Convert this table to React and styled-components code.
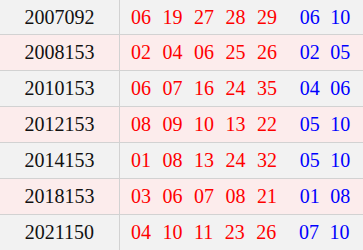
import React from "react";
import styled, { createGlobalStyle } from "styled-components";

const GlobalStyle = createGlobalStyle`
  body {
    margin: 0;
    background: #ffffff;
    font-family: "Liberation Serif", "Times New Roman", serif;
  }
`;

const DRAWS = [
  { issue: "2007092", red: ["06", "19", "27", "28", "29"], blue: ["06", "10"] },
  { issue: "2008153", red: ["02", "04", "06", "25", "26"], blue: ["02", "05"] },
  { issue: "2010153", red: ["06", "07", "16", "24", "35"], blue: ["04", "06"] },
  { issue: "2012153", red: ["08", "09", "10", "13", "22"], blue: ["05", "10"] },
  { issue: "2014153", red: ["01", "08", "13", "24", "32"], blue: ["05", "10"] },
  { issue: "2018153", red: ["03", "06", "07", "08", "21"], blue: ["01", "08"] },
  { issue: "2021150", red: ["04", "10", "11", "23", "26"], blue: ["07", "10"] },
];

const Table = styled.div`
  width: 363px;
  height: 250px;
  overflow: hidden;
`;

const Row = styled.div`
  display: grid;
  grid-template-columns: 120px 1fr;
  height: 35px;
  border-bottom: 1px solid #d2d2d2;
  background: ${(p) => (p.$odd ? "#fcecec" : "#f2f2f2")};

  &:first-child {
    height: 34px;
  }
`;

const IssueCell = styled.div`
  display: flex;
  align-items: center;
  justify-content: center;
  border-right: 1px solid #d2d2d2;
  font-size: 20px;
  color: #111;
`;

const NumbersCell = styled.div`
  display: flex;
  align-items: center;
  padding-left: 11px;
  font-size: 20px;
`;

const Group = styled.div`
  display: flex;
  gap: ${(p) => p.$gap}px;
  margin-left: ${(p) => p.$offset || 0}px;
`;

const Ball = styled.span`
  color: ${(p) => (p.$blue ? "#0000ff" : "#ff0000")};
`;

function DrawRow({ draw, odd }) {
  return (
    <Row $odd={odd}>
      <IssueCell>{draw.issue}</IssueCell>
      <NumbersCell>
        <Group $gap={11.5}>
          {draw.red.map((n, i) => (
            <Ball key={i}>{n}</Ball>
          ))}
        </Group>
        <Group $gap={10.5} $offset={22.7}>
          {draw.blue.map((n, i) => (
            <Ball key={i} $blue>
              {n}
            </Ball>
          ))}
        </Group>
      </NumbersCell>
    </Row>
  );
}

function App() {
  return (
    <>
      <GlobalStyle />
      <Table>
        {DRAWS.map((draw, i) => (
          <DrawRow key={draw.issue} draw={draw} odd={i % 2 === 1} />
        ))}
      </Table>
    </>
  );
}

export default App;
